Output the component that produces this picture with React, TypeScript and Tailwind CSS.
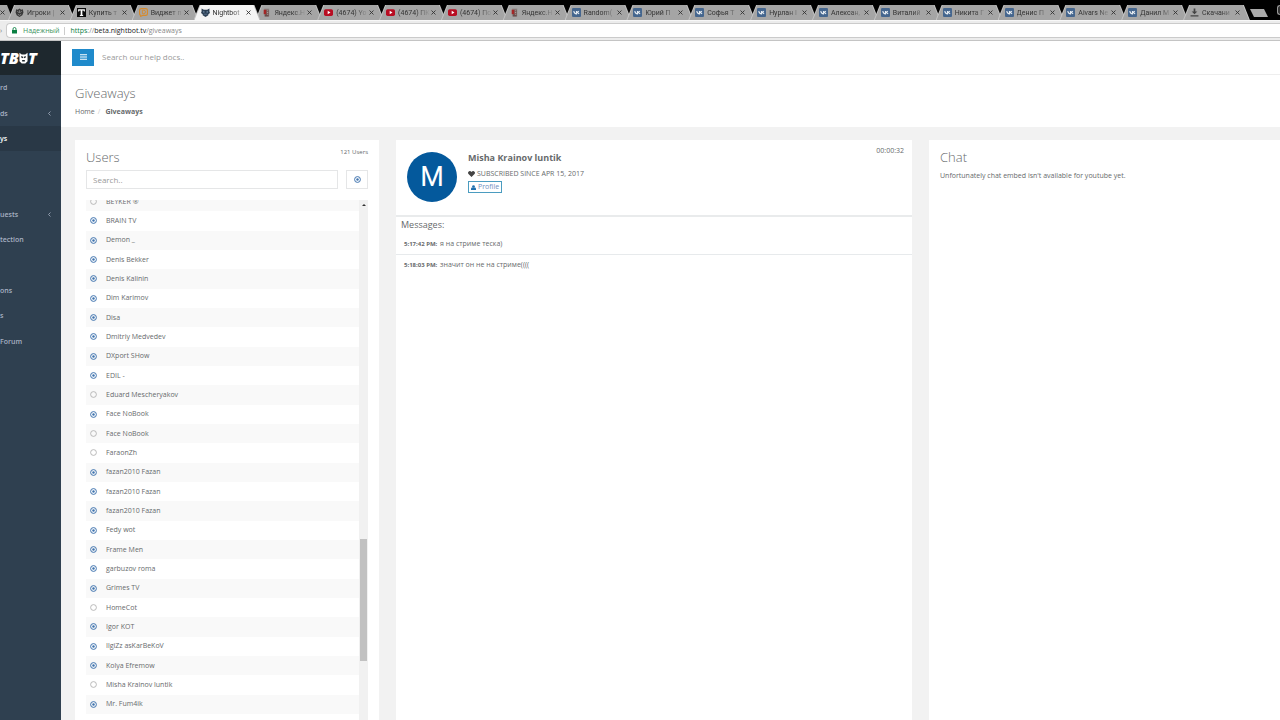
import type { ReactNode } from "react";

type IconName = "shield" | "t" | "chat" | "nightbot" | "yandex" | "youtube" | "vk" | "download";

const tabs: { title: string; icon: IconName }[] = [
  { title: "Игроки |", icon: "shield" },
  { title: "Купить т", icon: "t" },
  { title: "Виджет п", icon: "chat" },
  { title: "Nightbot", icon: "nightbot" },
  { title: "Яндекс.Н", icon: "yandex" },
  { title: "(4674) Yo", icon: "youtube" },
  { title: "(4674) ПК", icon: "youtube" },
  { title: "(4674) По", icon: "youtube" },
  { title: "Яндекс.Н", icon: "yandex" },
  { title: "Random(", icon: "vk" },
  { title: "Юрий П", icon: "vk" },
  { title: "Софья Т", icon: "vk" },
  { title: "Нурлан І", icon: "vk" },
  { title: "Алексан,", icon: "vk" },
  { title: "Виталий", icon: "vk" },
  { title: "Никита Г", icon: "vk" },
  { title: "Денис П", icon: "vk" },
  { title: "Aivars Ne", icon: "vk" },
  { title: "Данил М", icon: "vk" },
  { title: "Скачани", icon: "download" },
];

const users: [string, boolean][] = [
  ["BEYKER ®", false],
  ["BRAIN TV", true],
  ["Demon _", true],
  ["Denis Bekker", true],
  ["Denis Kalinin", true],
  ["Dim Karimov", true],
  ["Disa", true],
  ["Dmitriy Medvedev", true],
  ["DXport SHow", true],
  ["EDIL -", true],
  ["Eduard Mescheryakov", false],
  ["Face NoBook", true],
  ["Face NoBook", false],
  ["FaraonZh", false],
  ["fazan2010 Fazan", true],
  ["fazan2010 Fazan", true],
  ["fazan2010 Fazan", true],
  ["Fedy wot", true],
  ["Frame Men", true],
  ["garbuzov roma", true],
  ["Grimes TV", true],
  ["HomeCot", false],
  ["Igor KOT", true],
  ["IlgiZz asKarBeKoV", true],
  ["Kolya Efremow", true],
  ["Misha Krainov luntik", false],
  ["Mr. Fum4ik", true],
];

const nav: { label: string; arrow?: boolean; active?: boolean }[] = [
  { label: "rd" },
  { label: "ds", arrow: true },
  { label: "ys", active: true },
  { label: "" },
  { label: "" },
  { label: "uests", arrow: true },
  { label: "tection" },
  { label: "" },
  { label: "ons" },
  { label: "s" },
  { label: "Forum" },
];

function TabIcon({ name }: { name: IconName }) {
  const shapes: Record<IconName, ReactNode> = {
    shield: (
      <>
        <path d="M2 2 5 3 8 1l3 2 3-1 1 6-2 5-5 3-5-3-2-5z" fill="#383838" />
        <path d="M4 6l3 2M12 6 9 8M5 11l3 2 3-2M8 4v5" stroke="#9a9a9a" strokeWidth="1.3" fill="none" />
      </>
    ),
    t: (
      <>
        <rect width="16" height="16" fill="#0a0a0a" />
        <path d="M2 2h12v4h-1.500L11.500 4.500H9.500v7.500l1.500 1v1H5v-1l1.500-1V4.500h-2L3.500 6H2z" fill="#fff" />
      </>
    ),
    chat: (
      <>
        <path d="M4 1h8a3 3 0 0 1 3 3v6a3 3 0 0 1-3 3H7l-4 2v-2a3 3 0 0 1-2-3V4a3 3 0 0 1 3-3z" fill="none" stroke="#d78a2b" strokeWidth="2" />
        <path d="M6 4h2.500a3 3 0 0 1 0 6H6z" fill="none" stroke="#d78a2b" strokeWidth="1.6" />
      </>
    ),
    nightbot: (
      <>
        <path d="M1 1l4 2h6l4-2v5l1 3-3 2v2l-5 3-5-3v-2L0 9l1-3z" fill="#2c3f54" />
        <circle cx="5" cy="7" r="1.200" fill="#8fb0cf" />
        <circle cx="11" cy="7" r="1.200" fill="#8fb0cf" />
        <path d="M5 11h6" stroke="#6f8ca8" strokeWidth="1.200" />
      </>
    ),
    yandex: (
      <>
        <path d="M4 1h9v14H4z" fill="#8f8a88" />
        <path d="M3 3h5v8H3z" fill="#a32626" />
        <path d="M8 3h4v12H5v-4h3z" fill="#6b4c4a" />
        <path d="M9 5h2M9 8h2M9 11h2" stroke="#b9b2b0" strokeWidth="1.500" />
      </>
    ),
    youtube: (
      <>
        <rect y="2" width="16" height="12" rx="3" fill="#b80d22" />
        <path d="M6.500 5v6l5-3z" fill="#fff" />
      </>
    ),
    vk: (
      <>
        <rect width="16" height="16" rx="2" fill="#45668e" />
        <path d="M3 5.500c1 3 2.500 5 5 5v-5M8 8c2 0 3-1 4-2.500M8 8c2 0 3.500 1 4.500 2.500" stroke="#e6ecf2" strokeWidth="2" fill="none" />
      </>
    ),
    download: (
      <path d="M6.500 1h3v5H13l-5 5-5-5h3.500zM1 13h14v2H1z" fill="#444" />
    ),
  };
  return (
    <svg viewBox="0 0 16 16" className="size-[9px] shrink-0" aria-hidden="true">
      {shapes[name]}
    </svg>
  );
}

function Cross() {
  return (
    <svg viewBox="0 0 10 10" className="size-[5px]" aria-hidden="true">
      <path d="M1 1l8 8M9 1 1 9" stroke="#333" strokeWidth="1.800" />
    </svg>
  );
}

function Tab({ title, icon, active }: { title: string; icon: IconName; active: boolean }) {
  const z = active ? "z-10" : "";
  const fill = active ? "bg-[#f4f4f4]" : "bg-[#a5a5a5]";
  return (
    <div className={`relative min-w-0 flex-1 ${z}`}>
      <div className="absolute inset-y-0 left-0 -right-[5px] bg-[#c4c4c4] [clip-path:polygon(0_100%,6px_0,calc(100%-6px)_0,100%_100%)]" />
      <div className={`absolute inset-y-0 left-px -right-1 ${fill} [clip-path:polygon(0_100%,6px_0,calc(100%-6px)_0,100%_100%)]`} />
      <div className="relative flex h-full items-center pl-[7px]">
        <TabIcon name={icon} />
        <span className="ml-[3px] w-8 overflow-hidden font-[Roboto] text-[7px] leading-3 whitespace-nowrap text-[#333] [mask-image:linear-gradient(to_right,#000_60%,transparent)]">
          {title}
        </span>
        <button type="button" aria-label="Close tab" className="flex size-[7px] items-center justify-center">
          <Cross />
        </button>
      </div>
    </div>
  );
}

function Browser() {
  return (
    <header>
      <div className="flex h-5 bg-black pt-[5px]">
        <div className="relative w-2">
          <div className="absolute inset-y-0 left-0 -right-[5px] bg-[#a5a5a5] [clip-path:polygon(0_0,calc(100%-6px)_0,100%_100%,0_100%)]" />
          <div className="relative flex h-full items-center">
            <Cross />
          </div>
        </div>
        <div className="flex min-w-0 flex-1">
          {tabs.map((t, i) => (
            <Tab key={i} title={t.title} icon={t.icon} active={i === 3} />
          ))}
        </div>
        <div className="flex w-[35px] items-start justify-between pt-1 pl-[5px]">
          <button type="button" aria-label="New tab" className="h-2 w-[18px] bg-[#aaa] [clip-path:polygon(0_0,14px_0,100%_100%,4px_100%)]" />
          <div className="-mt-1 h-[10px] w-[3px] rounded-l-sm border border-r-0 border-[#999] bg-[#333]" />
        </div>
      </div>
      <div className="flex h-[21px] items-center border-t border-b border-t-[#f8f8f8] border-b-[#c4c4c4] bg-[#ececec]">
        <span className="w-[6px] text-[7px] leading-3 text-[#777]">›</span>
        <div className="flex h-[15px] flex-1 items-center rounded-l-sm border border-r-0 border-[#cbcbcb] bg-white pl-[5px] text-[7px] leading-3">
          <svg viewBox="0 0 10 12" className="h-[7px] w-[5px]" aria-hidden="true">
            <path d="M0 5h10v7H0z" fill="#0b8043" />
            <path d="M2 6V3a3 3 0 0 1 6 0v3" fill="none" stroke="#0b8043" strokeWidth="1.800" />
          </svg>
          <span className="ml-[6px] text-[#3b9460]">Надежный</span>
          <span className="mx-[5px] h-2 w-px bg-[#ccc]" />
          <span className="text-[#888]">
            <span className="text-[#0b8043]">https</span>://<span className="text-[#222]">beta.nightbot.tv</span>/giveaways
          </span>
        </div>
      </div>
    </header>
  );
}

function Sidebar() {
  return (
    <aside className="w-[61px] shrink-0 bg-[#2f4050]">
      <div className="flex h-[34px] items-center bg-[#1e282e] text-[16px] leading-4 font-black text-white italic">
        <span>T</span>
        <span>B</span>
        <svg viewBox="0 0 20 26" className="h-[13px] w-[9px]" aria-hidden="true">
          <path d="M1 0l5 4h8l5-4v19l-5 5H6l-5-5z" fill="#fff" />
          <path d="M5 9l4 2M15 9l-4 2M7 18h6" stroke="#1e282e" strokeWidth="3" />
        </svg>
        <span>T</span>
      </div>
      <nav className="grid h-[279px] auto-rows-fr text-[7px] leading-3 font-semibold text-[#a7b1c2]">
        {nav.map((n, i) =>
          n.label ? (
            <a
              key={i}
              href="#"
              className={`flex items-center justify-between pt-px pr-[10px] ${n.active ? "bg-[#293846] text-white" : ""}`}
            >
              {n.label}
              {n.arrow && (
                <svg viewBox="0 0 6 10" className="h-[5px] w-[3px]" aria-hidden="true">
                  <path d="M5 1 1 5l4 4" fill="none" stroke="#a7b1c2" strokeWidth="1.600" />
                </svg>
              )}
            </a>
          ) : (
            <span key={i} />
          ),
        )}
      </nav>
    </aside>
  );
}

function Dot({ on }: { on: boolean }) {
  return (
    <svg viewBox="0 0 14 14" className="size-[7px] shrink-0" aria-hidden="true">
      <circle cx="7" cy="7" r="5.800" fill="none" stroke={on ? "#3f73ae" : "#aaa"} strokeWidth={on ? 2 : 1.6} />
      {on && <circle cx="7" cy="7" r="2.400" fill="#3f73ae" />}
    </svg>
  );
}

function UsersPanel() {
  return (
    <section className="flex min-h-0 w-[304px] shrink-0 flex-col bg-white px-[11px] pt-[6px]">
      <div className="flex items-start justify-between">
        <h2 className="pt-[3px] text-[13px] leading-4 font-light">Users</h2>
        <small className="text-[6px] leading-3">121 Users</small>
      </div>
      <div className="mt-[5px] flex justify-between">
        <input
          aria-label="Search users"
          placeholder="Search.."
          className="h-[19px] w-[252px] border border-[#e5e6e7] px-[6px] text-[8px] leading-3 placeholder:text-[#999]"
        />
        <button type="button" aria-label="Filter users" className="flex h-[19px] w-[22px] items-center justify-center border border-[#e5e6e7]">
          <Dot on />
        </button>
      </div>
      <div className="mt-[11px] flex min-h-0 flex-1 overflow-hidden">
        <ul className="-mt-2 grid h-[522px] flex-1 auto-rows-fr text-[7px] leading-3">
          {users.map(([name, on], i) => (
            <li key={i} className="flex items-center gap-[9px] pl-1 odd:bg-[#f9f9f9]">
              <Dot on={on} />
              {name}
            </li>
          ))}
        </ul>
        <div className="flex w-[9px] flex-col items-center bg-[#f1f1f1] pt-1">
          <svg viewBox="0 0 8 4" className="h-[2px] w-1" aria-hidden="true">
            <path d="M0 4l4-4 4 4z" fill="#333" />
          </svg>
          <div className="mt-[333px] h-[122px] w-[7px] shrink-0 bg-[#c1c1c1]" />
        </div>
      </div>
    </section>
  );
}

function Winner() {
  return (
    <section className="min-w-0 flex-1 bg-white">
      <div className="flex h-[77px] items-start border-b-2 border-[#e9ebec] px-2 pl-[11px]">
        <div className="mt-3 flex size-[50px] items-center justify-center rounded-full bg-[#04599c] font-[Roboto] text-[27px] leading-8 text-white">
          M
        </div>
        <div className="mt-3 ml-[11px] flex flex-1 flex-col items-start">
          <h3 className="text-[9px] leading-3 font-bold">Misha Krainov luntik</h3>
          <p className="mt-1 flex items-center gap-0.5 text-[7px] leading-3">
            <svg viewBox="0 0 16 14" className="h-[6px] w-[7px]" aria-hidden="true">
              <path d="M8 14 1 7a4.200 4.200 0 0 1 0-5.500c2-2 5-2 7 1 2-3 5-3 7-1A4.200 4.200 0 0 1 15 7z" fill="#444" />
            </svg>
            SUBSCRIBED SINCE APR 15, 2017
          </p>
          <a href="#" className="mt-px flex h-3 items-center gap-0.5 border border-[#4b9cc0] px-[2px] text-[7px] leading-3 text-[#6f8fc0]">
            <svg viewBox="0 0 12 12" className="size-[5px]" aria-hidden="true">
              <circle cx="6" cy="3.500" r="3.200" fill="#1f6fae" />
              <path d="M0 12V9c0-2 2-3 3-3h6c1 0 3 1 3 3v3z" fill="#1f6fae" />
            </svg>
            Profile
          </a>
        </div>
        <time className="mt-[5px] text-[7px] leading-3">00:00:32</time>
      </div>
      <h4 className="px-[5px] pt-[2px] text-[9px] leading-3">Messages:</h4>
      <ul className="mt-[3px] text-[7px] leading-3">
        <li className="border-b border-[#e7eaec] px-2 pt-1 pb-1">
          <b className="mr-px text-[6px]">5:17:42 PM:</b> я на стриме теска)
        </li>
        <li className="px-2 pt-1">
          <b className="mr-px text-[6px]">5:18:03 PM:</b> значит он не на стриме((((
        </li>
      </ul>
    </section>
  );
}

export default function App() {
  return (
    <div className="flex h-screen flex-col overflow-hidden bg-[#f2f2f2] font-['Open_Sans','Noto_Sans',sans-serif] text-[#676a6c]">
      <Browser />
      <div className="flex min-h-0 flex-1">
        <Sidebar />
        <main className="flex min-w-0 flex-1 flex-col">
          <div className="flex h-[34px] items-center border-b border-[#eee] bg-white pb-px pl-[11px]">
            <button type="button" aria-label="Toggle menu" className="flex h-[17px] w-[22px] items-center justify-center bg-[#1f8acb]">
              <svg viewBox="0 0 14 12" className="h-[6px] w-[7px]" aria-hidden="true">
                <path d="M0 1.500h14M0 6h14M0 10.500h14" stroke="#fff" strokeWidth="2" />
              </svg>
            </button>
            <input aria-label="Search help docs" placeholder="Search our help docs.." className="ml-2 flex-1 text-[8px] leading-3 placeholder:text-[#999]" />
          </div>
          <div className="h-[52px] bg-white pt-[9px] pl-[14px]">
            <h1 className="text-[13px] leading-[18px] font-light">Giveaways</h1>
            <nav className="mt-1 text-[7px] leading-3">
              <a href="#">Home</a>
              <span className="mr-[5px] ml-[3px] text-[#ccc]">/</span>
              <b>Giveaways</b>
            </nav>
          </div>
          <div className="flex min-h-0 flex-1 gap-[17px] pt-[13px] pl-[14px]">
            <UsersPanel />
            <Winner />
            <section className="w-[351px] shrink-0 bg-white px-[11px] pt-[9px]">
              <h2 className="text-[13px] leading-4 font-light">Chat</h2>
              <p className="mt-[5px] text-[7px] leading-3">Unfortunately chat embed isn't available for youtube yet.</p>
            </section>
          </div>
        </main>
      </div>
    </div>
  );
}
